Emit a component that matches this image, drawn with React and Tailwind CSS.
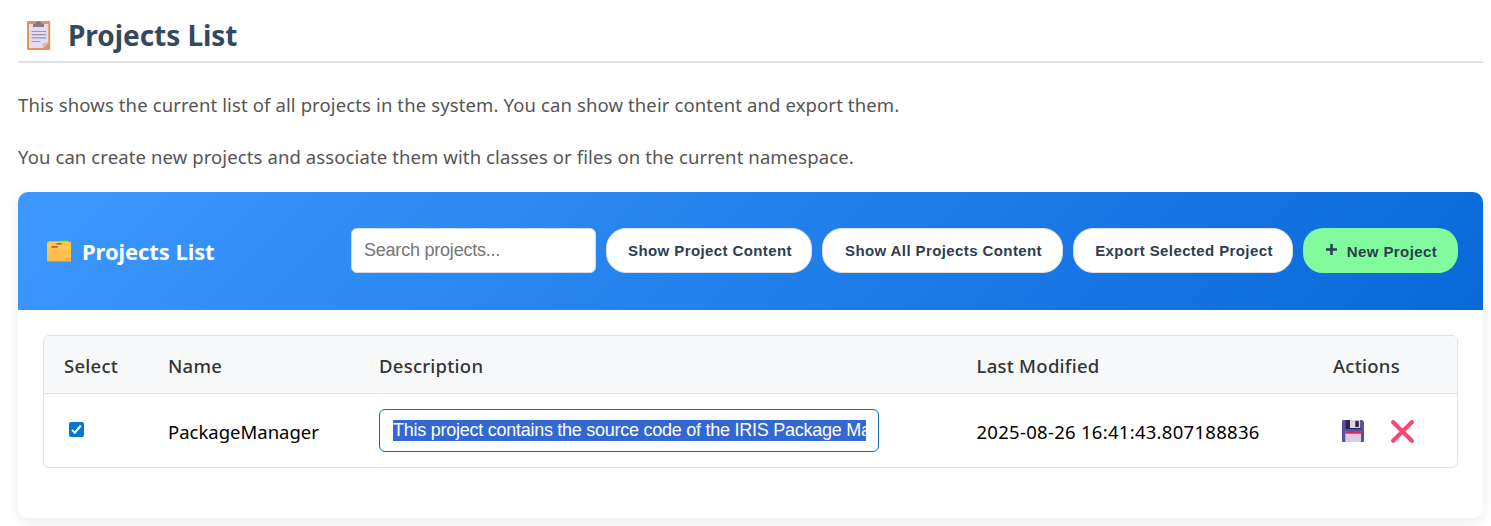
import React from "react";

function ClipboardIcon() {
  return (
    <svg className="block h-[30px] w-6 shrink-0" viewBox="0 0 24 30">
      <rect x="0" y="1" width="23.200" height="29" rx="1" fill="#e0965a" />
      <path d="M2 4h19.300v18.500l-5.300 5.500H2z" fill="#e5dbf1" />
      <path d="M15.500 28v-4.700l5.800-1.300z" fill="#c9bedb" />
      <path d="M6 7V4.700q0-1 1-1.200h2.200a2.500 2.500 0 0 1 5 0H16q1 .2 1 1.200V7z" fill="#83788c" />
      <path d="M4.500 11.500h14.500M4.500 14.700h14.500M4.500 17.900h14.500M4.500 21.500h9" stroke="#9d93aa" strokeWidth="1.200" />
    </svg>
  );
}

function FolderIcon() {
  return (
    <svg className="block h-[22px] w-6 shrink-0" viewBox="0 0 24 22">
      <defs>
        <linearGradient id="folder" x1="0" y1="0" x2="0" y2="1">
          <stop offset="0" stopColor="#ffd04c" />
          <stop offset="1" stopColor="#ffb84b" />
        </linearGradient>
      </defs>
      <path d="M13 1q1-1 2.500-1h4q1.500 0 1.500 1z" fill="#3fc380" />
      <path d="M1.500 1h20.500v4H1.500z" fill="#d8b454" />
      <rect x="0" y="2" width="24" height="19.500" rx="1.300" fill="url(#folder)" />
      <path d="M1 4h22" stroke="#edb847" strokeWidth="0.700" />
      <path d="M9 4.600q.3-1.600 1.500-1.600h3.500q1 0 1.200 1.600z" fill="#457bb6" />
      <path d="M4 7.800q.5-1.800 1.800-1.800h3.700q1.200 0 1.700 1.800z" fill="#f53c4d" />
    </svg>
  );
}

function FloppyIcon() {
  return (
    <svg className="block size-[22px]" viewBox="0 0 22 22">
      <path d="M1.300 0H20l2 2v18.700q0 1.300-1.300 1.300H1.300Q0 22 0 20.700V1.300Q0 0 1.300 0z" fill="#57509b" />
      <path d="M3.700 0h15.300v9H3.700z" fill="#302453" />
      <path d="M8 0h10.300v8H8z" fill="#dcd2e6" />
      <path d="M13.300 1h3.500v6h-3.500z" fill="#302453" />
      <path d="M3.300 11h15.700v11H3.300z" fill="#dccbe8" />
      <path d="M3.300 11h15.700v2.700H3.300z" fill="#e52954" />
    </svg>
  );
}

function CrossIcon() {
  return (
    <svg className="block size-[23px]" viewBox="0 0 23 23">
      <path d="M2.200 2.200l18.600 18.600M20.800 2.200L2.200 20.800" stroke="#fb4673" strokeWidth="4.200" strokeLinecap="round" />
    </svg>
  );
}

function Checkbox() {
  return (
    <span className="flex size-[15px] items-center justify-center rounded-[2px] bg-[#0078d7]">
      <svg className="block size-[15px]" viewBox="0 0 15 15">
        <path d="M3 7.900l2.800 2.800 6-7.200" fill="none" stroke="#fff" strokeWidth="2" />
      </svg>
    </span>
  );
}

function PillButton({ className, children }) {
  return (
    <button
      className={
        "flex h-[45px] shrink-0 items-center justify-center whitespace-nowrap rounded-[20px] pl-[2px] pt-[2px] font-['Liberation_Sans',sans-serif] text-[15px] font-bold tracking-[0.400px] text-[#2c3e50] " +
        className
      }
    >
      {children}
    </button>
  );
}

const columns = "grid grid-cols-[104px_211px_597.500px_356.500px_1fr] pl-5";

export default function App() {
  return (
    <main className="h-[526px] overflow-hidden bg-white pl-[18px] pr-2 font-['Noto_Sans',sans-serif]">
      <header className="flex h-[63px] items-start border-b-2 border-[#dee2e6] pl-[9px] pt-5">
        <ClipboardIcon />
        <h1 className="-mt-[5px] ml-[17px] whitespace-nowrap text-[28px] font-bold leading-10 tracking-[-0.050px] text-[#34495e]">
          Projects List
        </h1>
      </header>

      <div className="whitespace-nowrap pt-4 text-[18.500px] leading-[52px] tracking-[0.120px] text-[#555]">
        <p>This shows the current list of all projects in the system. You can show their content and export them.</p>
        <p className="tracking-[0.105px]">You can create new projects and associate them with classes or files on the current namespace.</p>
      </div>

      <section className="mt-[9px] h-[326px] rounded-[10px] bg-white shadow-[0_4px_15px_rgba(0,0,0,0.08)]">
        <div className="flex h-[118px] items-center rounded-t-[10px] bg-[linear-gradient(135deg,#3d98ff,#0969d9)] pl-[29px] pr-[25px]">
          <FolderIcon />
          <h2 className="ml-[11px] whitespace-nowrap text-[22px] font-bold leading-8 tracking-[-0.080px] text-white">Projects List</h2>
          <div className="-mt-px ml-auto flex gap-[10px]">
            <input
              className="h-[45px] w-[245px] rounded-[6px] border border-[#d5dce5] bg-white px-3 font-['Liberation_Sans',sans-serif] text-[18px] tracking-[-0.220px] text-black placeholder:text-[#757575]"
              placeholder="Search projects..."
            />
            <PillButton className="w-[206px] border border-[#dcdfe6] bg-white">Show Project Content</PillButton>
            <PillButton className="w-[241px] border border-[#dcdfe6] bg-white">Show All Projects Content</PillButton>
            <PillButton className="w-[220px] border border-[#dcdfe6] bg-white">Export Selected Project</PillButton>
            <PillButton className="w-[155px] bg-[#81fb9c]">
              <svg className="mb-[4px] mr-[10px] size-[11px]" viewBox="0 0 11 11">
                <path d="M5.500 0v11M0 5.500h11" stroke="#2c3e50" strokeWidth="2.500" />
              </svg>
              <span className="pt-px">New Project</span>
            </PillButton>
          </div>
        </div>

        <div className="px-[25px] pt-[25px]">
          <div className="h-[133px] overflow-hidden rounded-[6px] border border-[#dee2e6]">
            <div className={columns + " h-[58px] items-center whitespace-nowrap border-b border-[#dee2e6] bg-[#f8f9fb] pt-[2px] text-[18.500px] font-medium tracking-[0.250px] text-[#333]"}>
              <span>Select</span>
              <span>Name</span>
              <span>Description</span>
              <span>Last Modified</span>
              <span>Actions</span>
            </div>
            <div className={columns + " h-[73px] items-center whitespace-nowrap text-[18.500px] text-black"}>
              <span className="-mt-[2px] pl-[5px]"><Checkbox /></span>
              <span className="pt-[2px]">PackageManager</span>
              <div className="h-[43px] w-[500px] rounded-[6px] border border-[#1769aa] bg-[#fcfffe] pl-[13px] pr-3 pt-[10px] font-['Liberation_Sans',sans-serif] text-[18px] tracking-[-0.260px]">
                <div className="h-[21px] overflow-hidden bg-[#3367d1] leading-[21px] text-white">
                  This project contains the source code of the IRIS Package Ma
                </div>
              </div>
              <span className="pt-[2px] tracking-[0.280px]">2025-08-26 16:41:43.807188836</span>
              <div className="flex items-center gap-[27px] pl-[9px] pt-px">
                <FloppyIcon />
                <CrossIcon />
              </div>
            </div>
          </div>
        </div>
      </section>
    </main>
  );
}
